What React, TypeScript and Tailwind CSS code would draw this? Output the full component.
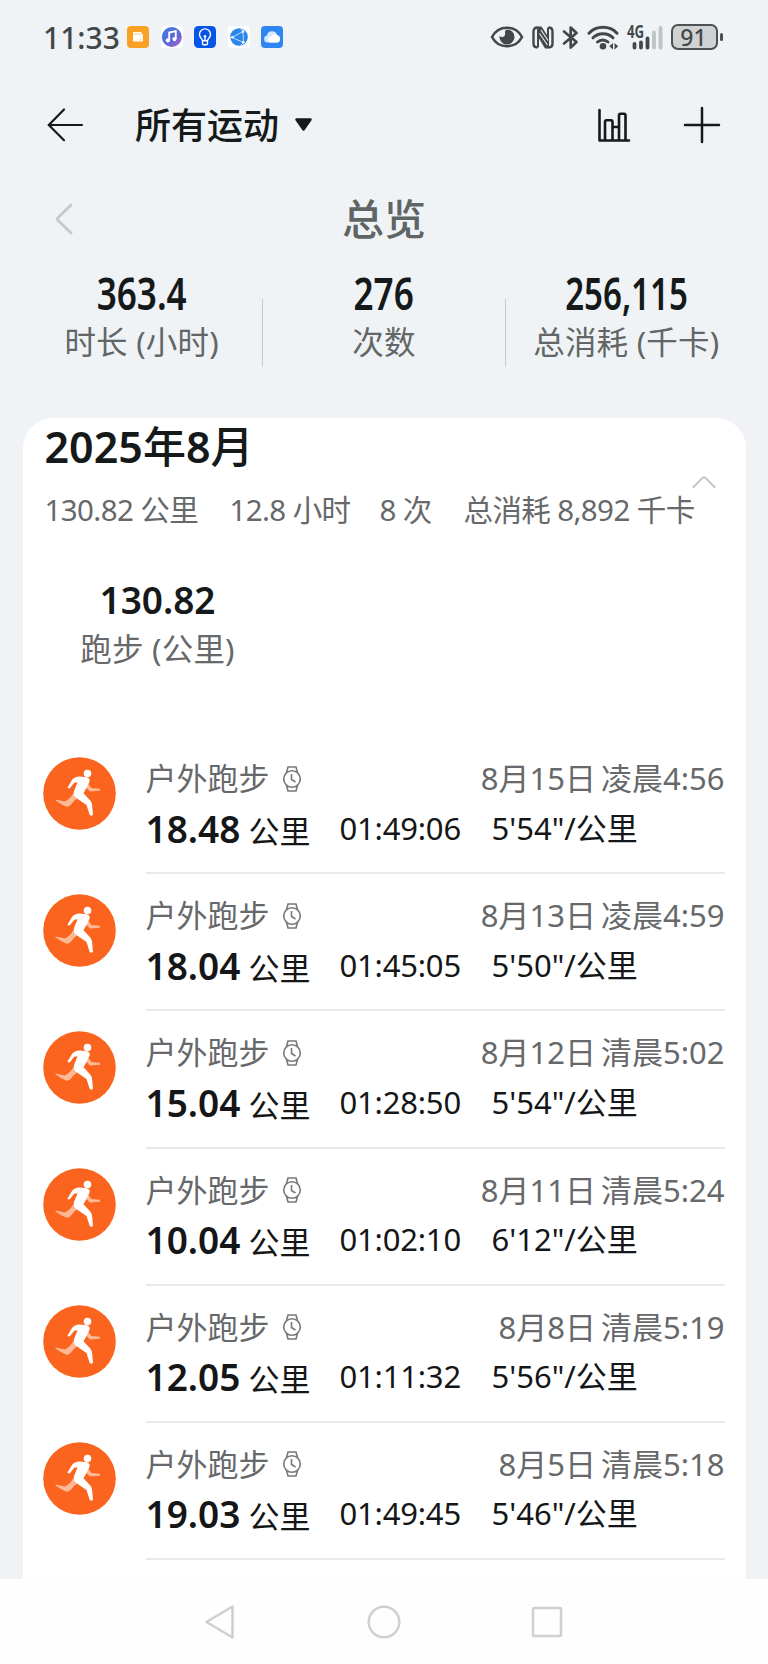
import type { ReactNode } from 'react';

type Run = {
  distance: string;
  duration: string;
  pace: string;
  date: string;
  time: string;
};

const runs: Run[] = [
  { distance: '18.48', duration: '01:49:06', pace: `5'54"`, date: '8月15日', time: '凌晨4:56' },
  { distance: '18.04', duration: '01:45:05', pace: `5'50"`, date: '8月13日', time: '凌晨4:59' },
  { distance: '15.04', duration: '01:28:50', pace: `5'54"`, date: '8月12日', time: '清晨5:02' },
  { distance: '10.04', duration: '01:02:10', pace: `6'12"`, date: '8月11日', time: '清晨5:24' },
  { distance: '12.05', duration: '01:11:32', pace: `5'56"`, date: '8月8日', time: '清晨5:19' },
  { distance: '19.03', duration: '01:49:45', pace: `5'46"`, date: '8月5日', time: '清晨5:18' },
];

function AppIcons() {
  return (
    <div className="flex items-center gap-[11.5px]">
      <svg width="22" height="22" viewBox="0 0 22 22">
        <rect width="22" height="22" rx="4" fill="#f8a126" />
        <path d="M7 6h7l2 3v5.5a1 1 0 0 1-1 1H7a1 1 0 0 1-1-1V7a1 1 0 0 1 1-1z" fill="#fffdf5" />
        <path d="M6.5 8h8M12 14h2" stroke="#f8b95c" strokeWidth="0.7" />
      </svg>
      <svg width="22" height="22" viewBox="0 0 22 22">
        <defs>
          <linearGradient id="music" x1="0" y1="0" x2="1" y2="1">
            <stop offset="0" stopColor="#3c7be0" />
            <stop offset="0.65" stopColor="#6567d4" />
            <stop offset="1" stopColor="#d05fd0" />
          </linearGradient>
        </defs>
        <rect width="22" height="22" rx="4" fill="#fdfeff" />
        <circle cx="10.8" cy="11" r="10" fill="url(#music)" />
        <path d="M8.2 14.3V6.600l6.600-1.400v7.700" fill="none" stroke="#fff" strokeWidth="1.800" />
        <circle cx="6.900" cy="14.400" r="2.100" fill="#fff" />
        <circle cx="13.500" cy="13.100" r="2.100" fill="#fff" />
      </svg>
      <svg width="22" height="22" viewBox="0 0 22 22">
        <rect width="22" height="22" rx="4.500" fill="#0754e8" />
        <path d="M8.500 14.800c0-2-3-3.200-3-6.400a5.500 5.500 0 0 1 11 0c0 3.200-3 4.400-3 6.400zM8.500 15v2.500q0 1.200 1.200 1.200h2.600q1.200 0 1.200-1.200V15M11 14.500v-4" fill="none" stroke="#fff" strokeWidth="1.400" />
        <circle cx="11" cy="10.300" r="1.300" fill="#fff" />
      </svg>
      <svg width="22" height="22" viewBox="0 0 22 22">
        <rect width="22" height="22" rx="4" fill="#fdfeff" />
        <circle cx="11" cy="11" r="8.800" fill="#2a86e8" />
        <path d="M4 11.500 15 5.500 15.500 16.500zM15 5.500 12.500 2.500M15.500 16.500l-3 3M4 11.500l-2 0" fill="none" stroke="#cfe7ff" strokeWidth="0.900" />
        <circle cx="4.500" cy="11.300" r="1.300" fill="#fff" />
        <circle cx="15" cy="5.500" r="1.300" fill="#fff" />
        <circle cx="15.300" cy="16.300" r="1.300" fill="#fff" />
      </svg>
      <svg width="22" height="22" viewBox="0 0 22 22">
        <rect width="22" height="22" rx="4" fill="#2f86f0" />
        <path d="M6.500 16.500a3.600 3.600 0 0 1-.6-7.100 5.300 5.300 0 0 1 10.200-.4 3.800 3.800 0 0 1-.3 7.500z" fill="#d5e8ff" />
        <path d="M9 16.500a3.200 3.200 0 0 1 1-6 4 4 0 0 1 7-.5 3.400 3.400 0 0 1-.8 6.500z" fill="#fff" />
      </svg>
    </div>
  );
}

function StatusBar() {
  return (
    <div className="flex h-[74px] items-center pl-[43px] text-[#42484a]">
      <div className="w-[84px] pt-[2px] text-[30px] leading-none font-medium">11:33</div>
      <AppIcons />
      <div className="ml-[207px] flex items-center text-[#42484a]">
        <svg width="34" height="24" viewBox="0 0 34 24">
          <path d="M2 12C8.500-.3 25.500-.3 32 12 25.500 24.300 8.500 24.300 2 12z" fill="none" stroke="currentColor" strokeWidth="2.600" />
          <path d="M17 4.500a7.500 7.500 0 1 1-7.400 6.200c1.600 2.400 6.400 1.400 5.400-3.200-.2-1.300.5-2.500 2-3z" fill="currentColor" />
        </svg>
        <svg width="22" height="23" viewBox="0 0 22 23" className="ml-[8px]">
          <path d="M5.500 1.500Q1.500 1.500 1.500 5.500v12q0 4 4 4M16.500 1.500q4 0 4 4v12q0 4-4 4" fill="none" stroke="currentColor" strokeWidth="2.400" />
          <path d="M6 21.500V4M16 1.500v17.500" fill="none" stroke="currentColor" strokeWidth="2" />
          <path d="M5 .5h4.500L17 12v10.500h-4L5 9z" fill="currentColor" />
          <path d="M7.500 7.500l8 11.500M9 4l7 10.500" stroke="#eff3f5" strokeWidth="1.100" />
        </svg>
        <svg width="17" height="25" viewBox="0 0 17 25" className="ml-[8px]">
          <path d="M2 6.500 14.500 17 8.700 22.500V2.500L14.500 8 2 18.500" fill="none" stroke="currentColor" strokeWidth="2.700" strokeLinejoin="round" strokeLinecap="round" />
        </svg>
        <svg width="32" height="25" viewBox="0 0 32 25" className="ml-[8px]">
          <g fill="none" stroke="currentColor" strokeWidth="3" strokeLinecap="round">
            <path d="M2 8.200C9.500.4 22.500.4 30 8.200" />
            <path d="M6 12.800c5.500-5.400 14.500-5.400 20 0" />
            <path d="M10.500 17c3-2.800 7.500-2.800 10.500 0" />
          </g>
          <circle cx="16" cy="21.300" r="3.300" fill="currentColor" />
          <path d="M26 18v6.500l-3.700-3.200zM27.500 18v6.500l3.700-3.200z" fill="currentColor" />
        </svg>
        <div className="relative ml-[8px] h-[26px] w-[37px]">
          <span className="absolute -top-px left-0 origin-left scale-x-[0.78] text-[17px] leading-none font-bold">4G</span>
          <svg width="37" height="26" viewBox="0 0 37 26">
            <path d="M7.500 20v3.500M14 18.500v5M20.500 14.500v9" stroke="currentColor" strokeWidth="3.800" strokeLinecap="round" />
            <path d="M27 8.500v15M33.500 4v19.500" stroke="#bfc3c5" strokeWidth="3.800" strokeLinecap="round" />
          </svg>
        </div>
        <div className="ml-[7px] flex h-[26px] w-[47px] items-center justify-center rounded-[7px] border-2 border-[#4b5051] bg-[#cfd2d3] pr-[2px] text-[23px] leading-none font-medium">
          91
        </div>
        <div className="ml-[2px] h-[8px] w-[3px] rounded-sm bg-[#4b5051]" />
      </div>
    </div>
  );
}

function Header() {
  return (
    <div className="flex h-[102px] items-center pl-[47px] text-[#15191a]">
      <svg width="38" height="36" viewBox="0 0 38 36" fill="none" stroke="currentColor" strokeWidth="2.200" strokeLinecap="round">
        <path d="M17 2.500 1.800 18 17 33.300M2 18h33" />
      </svg>
      <h1 className="ml-[50px] pt-[2px] text-[36px] leading-none font-medium">所有运动</h1>
      <svg width="20" height="14" viewBox="0 0 20 14" className="ml-[15px]">
        <path d="M2.500 1.500h14L9.500 11.500z" fill="currentColor" stroke="currentColor" strokeWidth="2.500" strokeLinejoin="round" />
      </svg>
      <svg width="34" height="34" viewBox="0 0 34 34" fill="none" stroke="currentColor" strokeWidth="2.600" strokeLinecap="round" strokeLinejoin="round" className="ml-[283px]">
        <path d="M2.500 2v30.500H32M8 32V14q0-1.700 1.500-1.700H14q1.500 0 1.500 1.700v18M15.500 19H22M22 32V7.500Q22 5.800 23.500 5.800H27q1.500 0 1.500 1.700V32" />
      </svg>
      <svg width="38" height="38" viewBox="0 0 38 38" fill="none" stroke="currentColor" strokeWidth="2.500" strokeLinecap="round" className="ml-[52px]">
        <path d="M19 2v34M2 19h34" />
      </svg>
    </div>
  );
}

function Total({ value, label, tight }: { value: string; label: string; tight?: boolean }) {
  return (
    <div className="flex flex-1 flex-col items-center">
      <div
        className={`h-[50px] text-[45px] leading-[50px] font-semibold text-[#15191a] ${tight ? 'scale-x-[0.735]' : 'scale-x-[0.78]'}`}
      >
        {value}
      </div>
      <div className="h-[46px] text-[31.500px] leading-[47px] tracking-[0.200px] whitespace-nowrap text-[#626667]">{label}</div>
    </div>
  );
}

function Overview() {
  return (
    <div className="h-[242px]">
      <div className="relative flex h-[88px] items-center justify-center pb-[3px]">
        <svg width="20" height="34" viewBox="0 0 20 34" className="absolute top-[26px] left-[54px]">
          <path d="M17 3 4.200 15.500q-1.500 1.500 0 3L17 31" fill="none" stroke="#c6caca" strokeWidth="3" strokeLinecap="round" />
        </svg>
        <h2 className="text-[42px] leading-none font-medium text-[#5f6465]">总览</h2>
      </div>
      <div className="flex px-[21px] pt-[4px]">
        <Total value="363.4" label="时长 (小时)" />
        <div className="mt-[31px] h-[68px] w-px bg-[#c8cccd]" />
        <Total value="276" label="次数" />
        <div className="mt-[31px] h-[68px] w-px bg-[#c8cccd]" />
        <Total value="256,115" label="总消耗 (千卡)" tight />
      </div>
    </div>
  );
}

function RunnerIcon() {
  return (
    <svg width="73" height="73" viewBox="0 0 73 73">
      <circle cx="36.500" cy="36.500" r="36.300" fill="#fb641f" />
      {/* trailing leg and far arm */}
      <path d="M12.500 42.500 22 44.500q6-3.500 8-8l5 4q-4 3-6.500 6.500-2.500 3.500-5.500 2.500-5-2-10.500-6zM45 26.500l3.500 4.500 8.500.8v2l-10 .7-4-4z" fill="#fdb894" />
      <circle cx="44.500" cy="16.500" r="3.800" fill="#fff" />
      <path d="M36.500 19.500 44 20.300q3.500 1 2.500 4.500L44 30l-3.500 6.300 6.500 7q1.500 1.700 2 4l1 10.500q-1.700 1.700-3.300.3L43.500 48l-9.500-6.500q-4.500-3-3-7.500L34.500 25.500 31.500 25.500 27 31q-1.500 1-2.500-.5l4.500-7.500q2.500-3.500 7.500-3.500z" fill="#fff" />
    </svg>
  );
}

function WatchIcon() {
  return (
    <svg width="20" height="28" viewBox="0 0 20 28" fill="none" stroke="#77797a" strokeWidth="1.600">
      <circle cx="10" cy="14" r="8.300" />
      <path d="M4.500 7.500 6 2h8l1.500 5.500M4.500 20.500 6 26h8l1.500-5.500M9.500 9v5.500l4 2.500" />
    </svg>
  );
}

function RunRow({ run }: { run: Run }) {
  return (
    <li className="flex h-[137.200px] pl-[20.500px]">
      <div className="mt-[19.500px] h-[73px] w-[73px]">
        <RunnerIcon />
      </div>
      <div className="ml-[29.500px] w-[579px] border-b-2 border-[#e9e9eb]">
        <div className="mt-[18.500px] flex h-[46px] items-center text-[31px] leading-none whitespace-nowrap text-[#66686a]">
          <span>户外跑步</span>
          <span className="ml-[12px]">
            <WatchIcon />
          </span>
          <span className="ml-auto">{run.date}</span>
          <span className="ml-[5px]">{run.time}</span>
        </div>
        <div className="flex h-[54px] items-baseline leading-[54px] whitespace-nowrap text-[#141617]">
          <span className="w-[103px] text-[37px] font-semibold">{run.distance}</span>
          <span className="w-[91px] text-[31px]">公里</span>
          <span className="w-[152px] -translate-y-[3px] text-[31px] tracking-[-0.200px]">{run.duration}</span>
          <span className="-translate-y-[3px] text-[31px]">{run.pace}/公里</span>
        </div>
      </div>
    </li>
  );
}

function MonthCard({ children }: { children: ReactNode }) {
  return (
    <section className="h-[1161px] bg-linear-to-r from-[#eff3f5] to-[#f1f2f5] px-[22.500px]">
      <div className="h-full overflow-hidden rounded-t-[30px] bg-white">
        <div className="h-[60px] pl-[22px] text-[43px] leading-[58px] font-medium text-[#15191a]">
          <span className="font-semibold">2025</span>年<span className="font-semibold">8</span>月
        </div>
        <div className="flex h-[63px] items-center pl-[22px] text-[29.500px] leading-none tracking-[-0.600px] whitespace-nowrap text-[#66686a]">
          <span className="w-[185px]">130.82 公里</span>
          <span className="w-[150px]">12.8 小时</span>
          <span className="w-[84px]">8 次</span>
          <span>总消耗 8,892 千卡</span>
          <svg width="24" height="14" viewBox="0 0 24 14" className="mb-[56px] -ml-[3px]">
            <path d="M1.500 12 11 2.500q1-1 2 0L22.500 12" fill="none" stroke="#c9c9cb" strokeWidth="2.200" strokeLinecap="round" />
          </svg>
        </div>
        <div className="mt-[31.500px] flex h-[164.500px] w-[270px] flex-col items-center">
          <div className="h-[53px] text-[37px] leading-[54px] font-semibold text-[#15191a]">130.82</div>
          <div className="h-[46px] text-[31.500px] leading-[46px] tracking-[0.200px] text-[#66686a]">跑步 (公里)</div>
        </div>
        <ul>{children}</ul>
      </div>
    </section>
  );
}

function NavBar() {
  return (
    <div className="flex h-[85px] bg-[#fefefe] pt-[26px] pl-[204px]">
      <svg width="32" height="34" viewBox="0 0 32 34">
        <path d="M28.500 1.500v31L2.500 17z" fill="none" stroke="#d0d0d0" strokeWidth="2.500" strokeLinejoin="round" />
      </svg>
      <svg width="34" height="34" viewBox="0 0 34 34" className="ml-[131px]">
        <circle cx="17" cy="17" r="15.300" fill="none" stroke="#d0d0d0" strokeWidth="2.500" />
      </svg>
      <svg width="32" height="34" viewBox="0 0 32 34" className="ml-[130px]">
        <rect x="2" y="3" width="28" height="28" rx="1" fill="none" stroke="#d0d0d0" strokeWidth="2.500" />
      </svg>
    </div>
  );
}

export default function App() {
  return (
    <div
      lang="zh-CN"
      className="h-[1664px] w-[768px] overflow-hidden bg-[#eff3f5] font-['Noto_Sans','Noto_Sans_CJK_SC',sans-serif]"
    >
      <StatusBar />
      <Header />
      <Overview />
      <MonthCard>
        {runs.map((run) => (
          <RunRow key={run.date} run={run} />
        ))}
      </MonthCard>
      <NavBar />
    </div>
  );
}
